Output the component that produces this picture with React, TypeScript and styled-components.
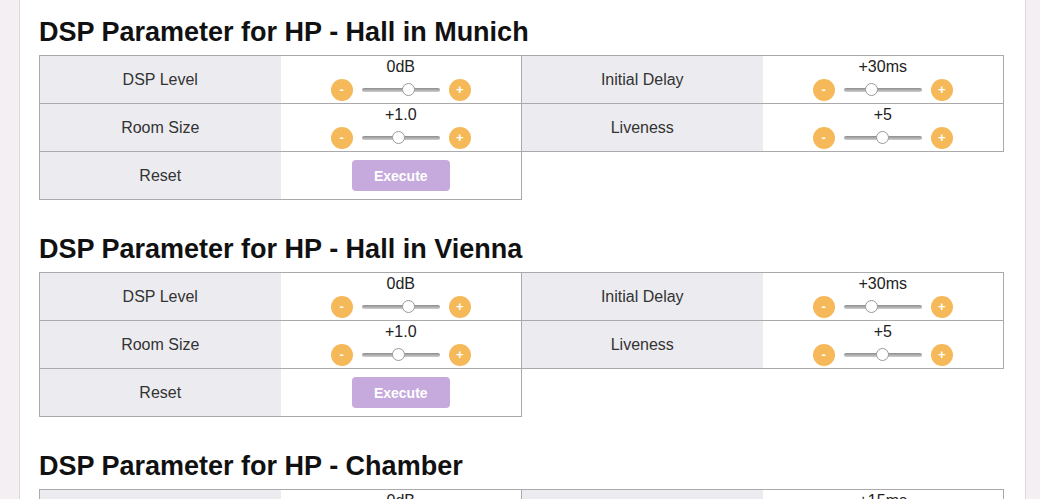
import React from "react";
import styled, { createGlobalStyle } from "styled-components";

const GlobalStyle = createGlobalStyle`
  html, body {
    margin: 0;
    padding: 0;
    background: #f3eff3;
    font-family: "Liberation Sans", Arial, sans-serif;
    color: #333;
  }
`;

const Page = styled.div`
  padding: 0 14px 0 19px;
  height: 499px;
  overflow: hidden;
`;

const Card = styled.div`
  background: #fff;
  border: 1px solid #dcd8dc;
  border-top: none;
  padding: 16px 20px 40px 19px;
`;

const Section = styled.section`
  margin-bottom: 33px;
`;

const Heading = styled.h2`
  margin: 0 0 7px;
  font-size: 27px;
  line-height: 32px;
  font-weight: 700;
  color: #111;
`;

const Table = styled.div`
  display: grid;
  grid-template-columns: 1fr 1fr;
  border-top: 1px solid #aaa;
  border-left: 1px solid #aaa;
  width: 965px;
  box-sizing: border-box;
`;

const Item = styled.div`
  display: grid;
  grid-template-columns: 1fr 1fr;
  height: 47px;
  border-right: 1px solid #aaa;
  border-bottom: 1px solid #aaa;
`;

const Label = styled.div`
  display: flex;
  align-items: center;
  justify-content: center;
  background: #ececf0;
  font-size: 16px;
  color: #333;
`;

const Value = styled.div`
  display: flex;
  flex-direction: column;
  align-items: center;
  justify-content: center;
  gap: 2px;
  background: #fff;
`;

const Reading = styled.div`
  font-size: 16px;
  line-height: 18px;
  color: #222;
`;

const Controls = styled.div`
  display: flex;
  align-items: center;
  height: 23px;
  gap: 9px;
`;

const RoundButton = styled.button`
  width: 22px;
  height: 22px;
  border-radius: 50%;
  border: none;
  padding: 0;
  background: #f5b95a;
  color: #fff;
  font-family: "Liberation Sans", Arial, sans-serif;
  font-size: 13px;
  font-weight: 700;
  line-height: 22px;
  cursor: pointer;
`;

const Slider = styled.input`
  -webkit-appearance: none;
  appearance: none;
  width: 78px;
  height: 4px;
  margin: 0;
  border-radius: 2px;
  background: linear-gradient(#8c8c8c, #cfcfcf);
  outline: none;

  &::-webkit-slider-thumb {
    -webkit-appearance: none;
    width: 13px;
    height: 13px;
    border-radius: 50%;
    background: #fff;
    border: 1px solid #9a9a9a;
    box-sizing: border-box;
  }
`;

const ExecuteButton = styled.button`
  width: 98px;
  height: 31px;
  border: none;
  border-radius: 4px;
  background: #c6aadd;
  color: #fff;
  font-family: "Liberation Sans", Arial, sans-serif;
  font-size: 14px;
  font-weight: 700;
  cursor: pointer;
`;

type Param = { label: string; value: string; pos: number };

type Preset = { title: string; params: Param[] };

const presets: Preset[] = [
  {
    title: "DSP Parameter for HP - Hall in Munich",
    params: [
      { label: "DSP Level", value: "0dB", pos: 62 },
      { label: "Initial Delay", value: "+30ms", pos: 33 },
      { label: "Room Size", value: "+1.0", pos: 46 },
      { label: "Liveness", value: "+5", pos: 50 },
    ],
  },
  {
    title: "DSP Parameter for HP - Hall in Vienna",
    params: [
      { label: "DSP Level", value: "0dB", pos: 62 },
      { label: "Initial Delay", value: "+30ms", pos: 33 },
      { label: "Room Size", value: "+1.0", pos: 46 },
      { label: "Liveness", value: "+5", pos: 50 },
    ],
  },
  {
    title: "DSP Parameter for HP - Chamber",
    params: [
      { label: "DSP Level", value: "0dB", pos: 62 },
      { label: "Initial Delay", value: "+15ms", pos: 25 },
      { label: "Room Size", value: "+1.0", pos: 46 },
      { label: "Liveness", value: "+5", pos: 50 },
    ],
  },
];

const ParamRow: React.FC<{ param: Param }> = ({ param }) => (
  <Item>
    <Label>{param.label}</Label>
    <Value>
      <Reading>{param.value}</Reading>
      <Controls>
        <RoundButton>-</RoundButton>
        <Slider type="range" min={0} max={100} defaultValue={param.pos} />
        <RoundButton>+</RoundButton>
      </Controls>
    </Value>
  </Item>
);

const App: React.FC = () => (
  <Page>
    <GlobalStyle />
    <Card>
      {presets.map((preset) => (
        <Section key={preset.title}>
          <Heading>{preset.title}</Heading>
          <Table>
            {preset.params.map((p) => (
              <ParamRow key={p.label} param={p} />
            ))}
            <Item>
              <Label>Reset</Label>
              <Value>
                <ExecuteButton>Execute</ExecuteButton>
              </Value>
            </Item>
          </Table>
        </Section>
      ))}
    </Card>
  </Page>
);

export default App;
